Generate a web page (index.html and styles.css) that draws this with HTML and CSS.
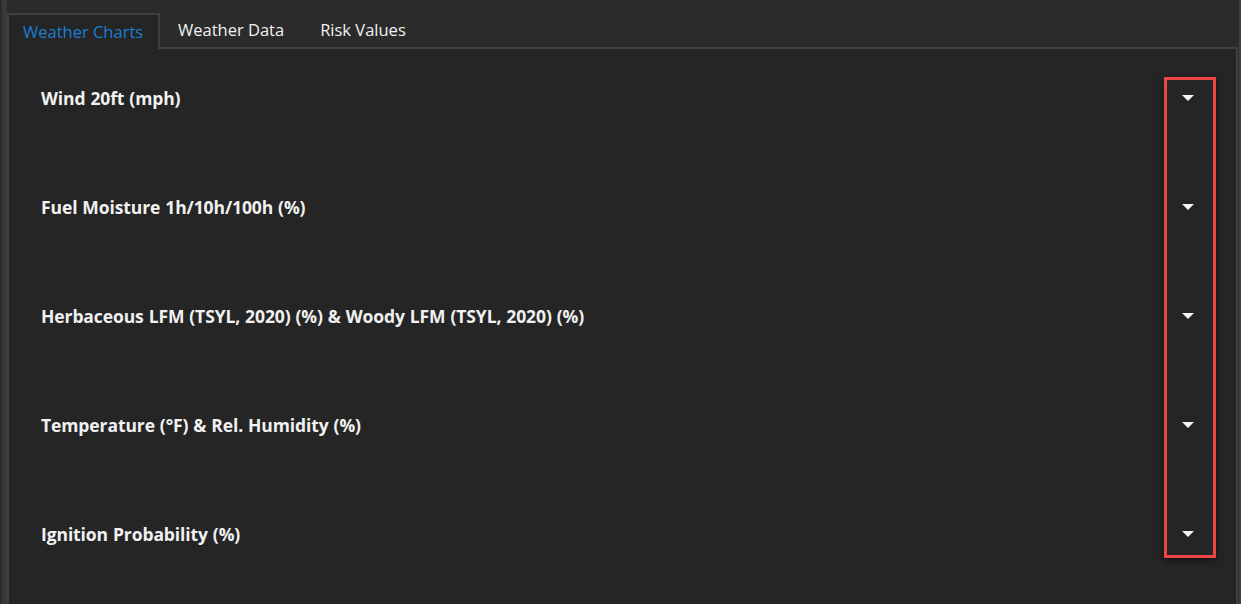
FILE: index.html
```html
<!DOCTYPE html>
<html lang="en">
<head>
    <meta charset="UTF-8">
    <title>Weather Charts</title>
    <link rel="stylesheet" href="styles.css">
</head>
<body>
    <div class="shell">
        <div class="tabs">
            <div class="tab active">Weather Charts</div>
            <div class="tab">Weather Data</div>
            <div class="tab">Risk Values</div>
        </div>
        <div class="panel">
            <div class="row">
                <span class="title">Wind 20ft (mph)</span>
                <span class="caret"></span>
            </div>
            <div class="row">
                <span class="title">Fuel Moisture 1h/10h/100h (%)</span>
                <span class="caret"></span>
            </div>
            <div class="row">
                <span class="title">Herbaceous LFM (TSYL, 2020) (%) &amp; Woody LFM (TSYL, 2020) (%)</span>
                <span class="caret"></span>
            </div>
            <div class="row">
                <span class="title">Temperature (°F) &amp; Rel. Humidity (%)</span>
                <span class="caret"></span>
            </div>
            <div class="row">
                <span class="title">Ignition Probability (%)</span>
                <span class="caret"></span>
            </div>
            <div class="highlight"></div>
        </div>
    </div>
</body>
</html>
```

FILE: styles.css
```css
html, body { margin: 0; height: 100%; }
body { background: #2b2b2b; font-family: "Open Sans", "Noto Sans", sans-serif; color: #f1f1f1; overflow: hidden; }

.shell { height: 604px; margin-left: 2px; border-left: 5px solid #38383d; border-right: 2px solid #3f3f46; padding-top: 13px; box-sizing: border-box; display: flex; flex-direction: column; }

.tabs { display: flex; height: 34px; position: relative; z-index: 1; }
.tab { padding: 0 18px; font-size: 16.5px; line-height: 34px; color: #f1f1f1; }
.tab.active { background: #252525; color: #1a7ed3; border: 2px solid #3f3f46; border-bottom: none; padding: 0 14px; height: 36px; box-sizing: border-box; width: 153px; }

.panel { flex: 1; background: #252525; border: 2px solid #3f3f46; border-bottom: none; margin-right: 1px; position: relative; padding-top: 38px; }

.row { height: 109px; display: flex; align-items: flex-start; padding-left: 32px; padding-right: 43px; box-sizing: border-box; }
.title { font-weight: bold; font-size: 17.5px; line-height: 22px; letter-spacing: -0.1px; word-spacing: 0.5px; flex: 1; }
.caret { width: 0; height: 0; border-left: 6px solid transparent; border-right: 6px solid transparent; border-top: 6px solid #f4f4f4; margin-top: 8px; margin-right: -1px; }

.highlight { position: absolute; left: 1155px; top: 28px; width: 52px; height: 481px; box-sizing: border-box; border: 3px solid #ee4545; box-shadow: 0 2px 6px rgba(0,0,0,0.55); }
```
